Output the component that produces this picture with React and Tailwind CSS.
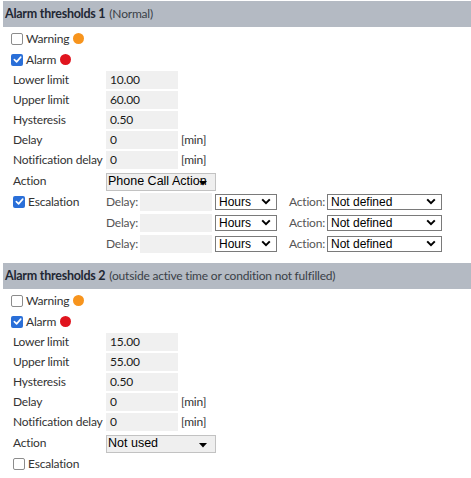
import React from 'react';

const ui = { fontFamily: 'Lato, "Noto Sans", Arial, sans-serif' };
const arial = { fontFamily: '"Liberation Sans", Arial, sans-serif' };

function Checkbox({ checked }) {
  if (checked) {
    return (
      <span className="inline-flex h-[12px] w-[12px] items-center justify-center rounded-[2px] bg-[#2a6fd8]">
        <svg width="9" height="9" viewBox="0 0 10 10">
          <path d="M1.5 5.2 L4 7.6 L8.6 2.4" fill="none" stroke="white" strokeWidth="1.8" strokeLinecap="round" strokeLinejoin="round" />
        </svg>
      </span>
    );
  }
  return <span className="inline-block h-[12px] w-[12px] rounded-[2px] border border-[#8c8c8c] bg-white" />;
}

function Chevron() {
  return (
    <svg width="10" height="7" viewBox="0 0 10 7" className="shrink-0">
      <path d="M1.2 1.4 L5 5.2 L8.8 1.4" fill="none" stroke="black" strokeWidth="2" />
    </svg>
  );
}

function Select({ value, width }) {
  return (
    <div
      className={`flex h-[16px] items-center justify-between border border-[#7a7a7a] bg-white pl-[3px] pr-[5px] text-[12px] leading-none tracking-normal text-black ${width}`}
      style={arial}
    >
      <span>{value}</span>
      <Chevron />
    </div>
  );
}

function Field({ label, value, unit }) {
  return (
    <div className="flex h-5 items-center pl-[13px]">
      <span className="w-[93px] shrink-0 whitespace-nowrap">{label}</span>
      <div className="flex h-[18px] w-[72px] items-center bg-[#f0f0f0] pl-[4px] text-[#1a1a1a]">{value}</div>
      {unit && <span className="ml-[3px]">{unit}</span>}
    </div>
  );
}

function Section({ num, note, lower, upper, action, escalation }) {
  return (
    <div>
      <div className="ml-[3px] flex h-[26px] items-center bg-[#b4bac3] pl-[2px] text-[12.5px] text-[#1f2733]">
        <span className="font-bold tracking-[-0.25px]">Alarm thresholds {num}</span>
        <span className="ml-[4px] text-[12px] tracking-[-0.2px] text-[#3a3f47]">{note}</span>
      </div>
      <div className="pt-px">
        <div className="flex h-[21px] items-center gap-[3px] pl-[11px]">
          <Checkbox />
          <span>Warning</span>
          <span className="ml-px h-[11px] w-[11px] rounded-full bg-[#f7941d]" />
        </div>
        <div className="flex h-[21px] items-center gap-[3px] pl-[11px]">
          <Checkbox checked />
          <span>Alarm</span>
          <span className="ml-px h-[11px] w-[11px] rounded-full bg-[#e0141e]" />
        </div>
        <Field label="Lower limit" value={lower} />
        <Field label="Upper limit" value={upper} />
        <Field label="Hysteresis" value="0.50" />
        <Field label="Delay" value="0" unit="[min]" />
        <Field label="Notification delay" value="0" unit="[min]" />
        <div className="flex h-[21px] items-center pl-[13px]">
          <span className="w-[93px] shrink-0">Action</span>
          <div
            className="relative mt-[2px] flex h-[18px] w-[110px] items-center border border-[#c2c2c2] bg-[#efefef] pl-[1px] text-[12.5px] tracking-normal text-black"
            style={arial}
          >
            <span className="whitespace-nowrap">{action}</span>
            <svg width="8" height="5" viewBox="0 0 8 5" className="absolute right-[8px] top-[7px]">
              <path d="M0 0 H8 L4 4.5 Z" fill="black" />
            </svg>
          </div>
        </div>
        {escalation ? (
          <div className="flex">
            <div className="flex h-[21px] w-[106px] shrink-0 items-center gap-[3px] pl-[13px]">
              <Checkbox checked />
              <span>Escalation</span>
            </div>
            <div className="flex flex-col">
              {[0, 1, 2].map((i) => (
                <div key={i} className="flex h-[21px] items-center">
                  <span className="w-[34px] text-[#555]">Delay:</span>
                  <div className="h-[18px] w-[72px] bg-[#f0f0f0]" />
                  <div className="ml-[3px]">
                    <Select value="Hours" width="w-[62px]" />
                  </div>
                  <span className="ml-[12px] w-[38px] whitespace-nowrap text-[#555]">Action:</span>
                  <Select value="Not defined" width="w-[115px]" />
                </div>
              ))}
            </div>
          </div>
        ) : (
          <div className="flex h-[21px] items-center gap-[3px] pl-[13px]">
            <Checkbox />
            <span>Escalation</span>
          </div>
        )}
      </div>
    </div>
  );
}

export default function App() {
  return (
    <div
      className="h-[478px] w-[471px] overflow-hidden bg-white pt-px text-[12px] tracking-[-0.2px] text-[#333]"
      style={ui}
    >
      <Section num="1" note="(Normal)" lower="10.00" upper="60.00" action="Phone Call Action" escalation />
      <div className="h-[9px]" />
      <Section
        num="2"
        note="(outside active time or condition not fulfilled)"
        lower="15.00"
        upper="55.00"
        action="Not used"
      />
    </div>
  );
}
